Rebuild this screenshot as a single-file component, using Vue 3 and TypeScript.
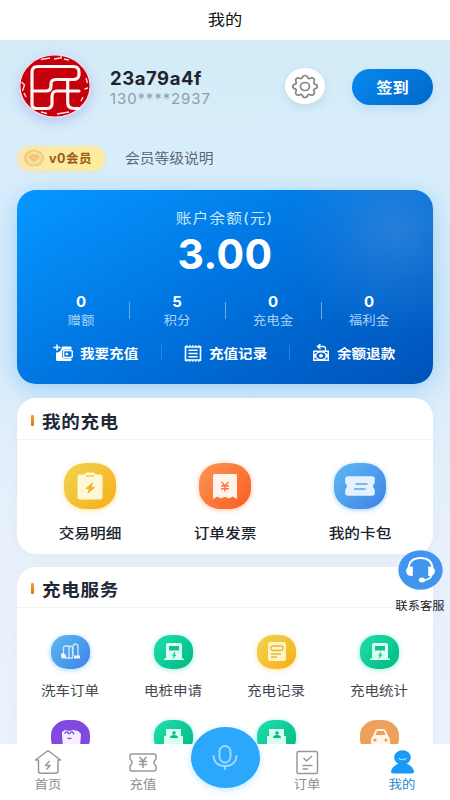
<script setup lang="ts">
interface Item { label: string; icon: string; tone: string }

const stats = [
  { value: '0', label: '赠额' },
  { value: '5', label: '积分' },
  { value: '0', label: '充电金' },
  { value: '0', label: '福利金' },
]
const actions = [
  { label: '我要充值', icon: 'wallet' },
  { label: '充值记录', icon: 'list' },
  { label: '余额退款', icon: 'refund' },
]
const charging: Item[] = [
  { label: '交易明细', icon: 'clipboard', tone: 'yellow' },
  { label: '订单发票', icon: 'invoice', tone: 'orange' },
  { label: '我的卡包', icon: 'coupon', tone: 'blue' },
]
const services: Item[] = [
  { label: '洗车订单', icon: 'wash', tone: 'blue' },
  { label: '电桩申请', icon: 'pile', tone: 'green' },
  { label: '充电记录', icon: 'record', tone: 'yellow' },
  { label: '充电统计', icon: 'pile', tone: 'green' },
  { label: '', icon: 'gift', tone: 'purple' },
  { label: '', icon: 'person', tone: 'green' },
  { label: '', icon: 'person', tone: 'green' },
  { label: '', icon: 'car', tone: 'tan' },
]
</script>

<template>
  <div class="page">
    <header class="title"><span class="wide">我的</span></header>

    <main class="content">
      <section class="profile">
        <div class="avatar">
          <svg width="72" height="64" viewBox="0 0 72 64" fill="none">
            <ellipse cx="36" cy="32" rx="35.5" ry="31.5" fill="#c4000d" />
            <ellipse cx="36" cy="32" rx="35.2" ry="31.2" stroke="#f3dcec" stroke-width="1.4" />
            <path d="M22 5.500l9-1.500M35 5l6-1M42 1v4M45 5l5 1M2.500 28l3 3-2 6M5 39l2 4M67 24l1.500 5M65.500 35l3.500-1M64 43l-2 4M38 60l12-2M22 58l6 1.500" stroke="#f8dedd" stroke-width="1.400" />
            <path d="M13 50V18q0-5.500 6-5.500h35q6 0 6 5.500v2.500q0 5-6 5H37q-5 0-5 4.500v2q0 5-5 5H13M13 50q0 4.500 4.500 4.500H28q5 0 5-5v-7q0-5.500 5-5.500h22M48.700 27v21.500q0 6 6 6H60" stroke="#fff5f3" stroke-width="3.200" stroke-linejoin="round" stroke-linecap="round" />
          </svg>
        </div>
        <div class="identity">
          <div class="name">23a79a4f</div>
          <div class="phone">130****2937</div>
        </div>
        <button class="gear" aria-label="设置">
          <svg width="28" height="25" viewBox="0 0 28 25" fill="none" stroke="#858585" stroke-width="1.700" stroke-linejoin="round">
            <path d="M11.300 3.700Q11.800 1.500 14 1.500T16.700 3.700Q17.500 5.200 19.300 4.300Q21.300 3.200 22.700 4.600T23 7.700Q22 9.300 23.900 10.100Q26.200 10.600 26.200 12.500T23.900 14.900Q22 15.700 23 17.300Q24.100 19 22.700 20.400T19.300 20.700Q17.500 19.800 16.700 21.300Q16.200 23.500 14 23.500T11.300 21.300Q10.500 19.800 8.700 20.700Q6.700 21.800 5.300 20.400T5 17.300Q6 15.700 4.100 14.900Q1.800 14.400 1.800 12.500T4.100 10.100Q6 9.300 5 7.700Q3.900 6 5.300 4.600T8.700 4.300Q10.500 5.200 11.300 3.700Z" />
            <ellipse cx="14" cy="12.500" rx="4.500" ry="4" />
          </svg>
        </button>
        <button class="checkin"><span class="wide">签到</span></button>
      </section>

      <section class="member">
        <div class="badge">
          <svg width="22" height="18" viewBox="0 0 22 18">
            <ellipse cx="11" cy="9" rx="10" ry="8.600" fill="#efcd7e" />
            <ellipse cx="11" cy="9" rx="7.600" ry="6.400" fill="#f9e09d" />
            <path d="M7.500 5.500h7L16.800 8.200 11 13.200 5.200 8.200z" fill="#efc575" />
            <path d="M8.800 8l2.200 1.800L13.200 8" fill="none" stroke="#f7dc9a" stroke-width="1" />
          </svg>
          <span>v0会员</span>
        </div>
        <div class="level"><span class="wide left">会员等级说明</span></div>
      </section>

      <section class="balance">
        <div class="caption"><span class="wide">账户余额(元)</span></div>
        <div class="amount">3.00</div>
        <div class="stats">
          <div v-for="s in stats" :key="s.label" class="stat">
            <b>{{ s.value }}</b>
            <span class="wide">{{ s.label }}</span>
          </div>
        </div>
        <div class="actions">
          <div v-for="a in actions" :key="a.label" class="action">
            <svg v-if="a.icon === 'wallet'" class="wallet" width="20" height="18" viewBox="0 0 20 18" fill="none">
              <path d="M4 .5v6M.5 3.500h7" stroke="#fff" stroke-width="1.600" />
              <path d="M9 2.500h8.500q1 0 1 1V5.500H12q-3 0-3 3v3q0 3 3 3h6.500v1.500q0 1-1 1H4.500q-1.500 0-1.500-1.500V8.500h1.500Q8.500 7.500 9 2.500z" fill="#fff" />
              <rect x="10.500" y="6.500" width="8.800" height="7" rx="1.500" stroke="#fff" stroke-width="1.500" />
              <ellipse cx="13.800" cy="10" rx="1.500" ry="1.300" fill="#fff" />
            </svg>
            <svg v-else-if="a.icon === 'list'" width="18" height="17" viewBox="0 0 18 17" fill="none" stroke="#fff" stroke-width="1.600">
              <path d="M1.500 1v15M16.500 1v15M1 2h16M1 15h16M4.500 5.300h9M4.500 8.500h9M4.500 11.700h9" />
              <path d="M2 1h14M2 16h14" stroke-dasharray="1.500 1.500" />
            </svg>
            <svg v-else width="18" height="18" viewBox="0 0 18 18">
              <path d="M8.500 0 5.500 2.500 8.500 5M6 2.500h5q2.500 0 2.500 2V7" fill="none" stroke="#fff" stroke-width="1.400" />
              <path d="M1 6.500h16V17H1z" fill="#fff" />
              <path d="M2.500 8h3l-3 2.500zM15.500 8h-3l3 2.500zM2.500 15.500h3l-3-2.500zM15.500 15.500h-3l3-2.500z" fill="#0a63c6" />
              <ellipse cx="9" cy="11.700" rx="4.500" ry="3.300" fill="#0a63c6" /><ellipse cx="9" cy="11.700" rx="2" ry="1.700" fill="#fff" />
            </svg>
            <span class="action-text"><span class="wide left">{{ a.label }}</span></span>
          </div>
        </div>
      </section>

      <section class="panel mine">
        <h2><i></i><span class="wide left">我的充电</span></h2>
        <div class="grid three">
          <div v-for="c in charging" :key="c.label" class="cell">
            <div class="tile big" :class="c.tone">
              <svg width="32" height="29" viewBox="0 0 32 29" fill="none">
                <template v-if="c.icon === 'clipboard'">
                  <path d="M6 2.500h5q0-2 2-2h6q2 0 2 2h5q2.500 0 2.500 2.500v20q0 2.500-2.500 2.500H6q-2.500 0-2.500-2.500V5Q3.500 2.500 6 2.500z" fill="#fff8d8" />
                  <path d="M12 4h8" stroke="#f3ce57" stroke-width="1.500" />
                  <path d="M18.500 11l-6.500 5.500h3.500L14 21l6.500-5.500H17z" fill="#f0b32a" stroke="#f0b32a" stroke-width="1" stroke-linejoin="round" />
                </template>
                <template v-else-if="c.icon === 'invoice'">
                  <path d="M5.500 2h21q1.500 0 1.500 1.500V27l-4.500-2.500L20 26.500q-1.500-1.500-4-1.500t-4 1.500L8.500 24.500 4 27V3.500Q4 2 5.500 2z" fill="#fff3eb" />
                  <path d="M12.500 10l3.500 4 3.500-4M16 14v5.500M12 14h8M12 16.800h8" stroke="#f77b45" stroke-width="1.500" />
                </template>
                <template v-else>
                  <path d="M4 4.300h24q2.800 0 2.800 2.700v4q-3.500 3 0 6.500V21q0 2.700-2.800 2.700H4Q1.200 23.700 1.200 21v-3.500q3.500-3.500 0-6.500V7Q1.200 4.300 4 4.300z" fill="#e4f1ff" />
                  <path d="M12 12h11M10.500 17h10.500" stroke="#5ba3ea" stroke-width="1.500" stroke-linecap="round" />
                </template>
              </svg>
            </div>
            <span class="wide">{{ c.label }}</span>
          </div>
        </div>
      </section>

      <section class="panel service">
        <h2><i></i><span class="wide left">充电服务</span></h2>
        <div class="grid four">
          <div v-for="(s, i) in services" :key="i" class="cell">
            <div class="tile" :class="s.tone">
              <svg width="22" height="20" viewBox="0 0 22 20" fill="none">
                <template v-if="s.icon === 'wash'">
                  <path d="M3.500 12V6q0-2 2-2h3.500v12H6M9 16V4.500h3.500V16H9M13 14V5q0-3 2.500-3T18 5v9" stroke="#cce8fd" stroke-width="1.300" />
                  <path d="M1 12q2.500-2 5 1v3.500H3Q1 16.500 1 14.500zM14 13.500h6v3h-6z" fill="#e9f6ff" />
                </template>
                <template v-else-if="s.icon === 'pile'">
                  <path d="M5 1h12q2 0 2 2v13.500h2V18H1v-1.500h2V3q0-2 2-2z" fill="#d9fff0" />
                  <path d="M6 4h10v4.500H6z" fill="#17bf90" />
                  <path d="M12 10l-2.500 3.300h1.800L10 16.500l3-3.600h-1.700z" fill="#17bf90" stroke="#17bf90" stroke-width=".5" />
                </template>
                <template v-else-if="s.icon === 'record'">
                  <path d="M4 0h14q2 0 2 2v15q0 2-2 2H4q-2 0-2-2V2q0-2 2-2z" fill="#fff4c5" />
                  <rect x="5" y="4" width="12" height="4.500" rx="2" stroke="#e9b92f" stroke-width="1.300" />
                  <path d="M5 12h10M5 15h6" stroke="#e9b92f" stroke-width="1.300" />
                </template>
                <template v-else-if="s.icon === 'gift'">
                  <path d="M2 5l3-2 4 1 4-1 5 1 3 3-1 13H3L2 8z" fill="#f6efff" />
                  <path d="M5 7q0-2.500 2-2t1.500 2.500M10 7q0-2.500 2-2t1.500 2.500M7.500 11q2 1 4 0" stroke="#874be1" stroke-width="1.300" />
                </template>
                <template v-else-if="s.icon === 'person'">
                  <path d="M3 2h15v7h2v11H1V9h2z" fill="#d6ffed" />
                  <circle cx="11" cy="6" r="1.800" fill="#0ab88a" /><path d="M7 11q0-3 4-3t4 3z" fill="#0ab88a" />
                </template>
                <template v-else>
                  <path d="M4 9l2-5q1-2 3-2h5q2 0 3 2l2 5q2 1 2 4v7H2v-7q0-3 2-4z" fill="#fff4e8" />
                  <path d="M6.500 8l1.500-4h7l1.500 4z" fill="#ef9e57" />
                  <circle cx="6" cy="13" r="1.600" fill="#ef9e57" /><circle cx="17" cy="13" r="1.600" fill="#ef9e57" />
                </template>
              </svg>
            </div>
            <span class="wide">{{ s.label }}</span>
          </div>
        </div>
      </section>
    </main>

    <aside class="support">
      <svg width="45" height="40" viewBox="0 0 45 40" fill="none">
        <ellipse cx="22.500" cy="20" rx="22.200" ry="19.700" fill="#4295ee" />
        <path d="M10.500 18q1-10 12-10t12 10" stroke="#fff" stroke-width="1.800" />
        <path d="M14.800 16.500v9.500q-6.300.5-6.800-4.700 0-5 6.800-4.800zM30.200 16.500v9.500q6.300.5 6.800-4.700 0-5-6.800-4.800z" fill="#fff" />
        <path d="M33.800 25q-1.500 4.500-8.300 5.500" stroke="#fff" stroke-width="1.700" />
        <ellipse cx="24" cy="30" rx="3.200" ry="2.500" fill="#fff" />
      </svg>
      <span class="wide">联系客服</span>
    </aside>

    <nav class="tabs">
      <div class="tab">
        <svg width="28" height="26" viewBox="0 0 28 26" fill="none" stroke="#999" stroke-width="1.500" stroke-linejoin="round">
          <path d="M4.500 11H1.500L14 1.500 26.500 11H24v11q0 2.200-2.200 2.200H6.700Q4.500 24.200 4.500 22z" />
          <path d="M15.500 12L11.500 16.500h4.500l-3.500 4" />
        </svg>
        <span class="wide">首页</span>
      </div>
      <div class="tab">
        <svg width="28" height="26" viewBox="0 0 28 26" fill="none" stroke="#999" stroke-width="1.500" stroke-linejoin="round">
          <path d="M3 5h22q2 0 2 2v3q-4 3.500 0 7v3q0 2-2 2H3q-2 0-2-2v-3q4-3.500 0-7V7q0-2 2-2z" />
          <path d="M10.500 8l3.500 4 3.500-4M14 12v7M10 12.500h8M10 15.500h8" />
        </svg>
        <span class="wide">充值</span>
      </div>
      <div class="mic">
        <svg width="30" height="30" viewBox="0 0 30 30" fill="none" stroke="#a1d7ff" stroke-width="2">
          <rect x="9.500" y="3" width="11" height="16.500" rx="5.500" />
          <path d="M3.500 13q1 10 11.500 10t11.500-10M15 23v3" stroke-linecap="round" />
        </svg>
      </div>
      <div class="tab">
        <svg width="28" height="26" viewBox="0 0 28 26" fill="none" stroke="#999" stroke-width="1.500">
          <rect x="4" y="2.500" width="20.500" height="22" rx="1.500" />
          <path d="M10.500 9l3 3L19 7M9.500 16.500h10M9.500 20h5.500" />
        </svg>
        <span class="wide">订单</span>
      </div>
      <div class="tab active">
        <svg width="28" height="26" viewBox="0 0 28 26">
          <ellipse cx="14.500" cy="8.500" rx="8.300" ry="7.300" fill="#189af5" />
          <path d="M9.500 15h10q5.500 2.500 6.500 7.500.2 2-2 2H5q-2 0-2-2Q4 17.500 9.500 15z" fill="#189af5" />
          <path d="M11 9.500q3.500 2.500 7 0" fill="none" stroke="#a8dcff" stroke-width="1.200" stroke-linecap="round" />
        </svg>
        <span class="wide">我的</span>
      </div>
    </nav>
  </div>
</template>

<style>
body { margin: 0; overflow: hidden; }
</style>

<style scoped>
.page {
  position: relative;
  display: flex;
  flex-direction: column;
  width: 450px;
  height: 800px;
  overflow: hidden;
  background: #fff;
  font-family: Inter, "Noto Sans CJK SC", sans-serif;
  color: #20242c;
}
.page * { box-sizing: border-box; }
.wide { display: inline-block; transform: scaleX(1.12); white-space: nowrap; }
.wide.left { transform-origin: left center; }
button { border: 0; padding: 0; font: inherit; }
svg { display: block; flex: none; }

.title { flex: none; height: 40px; line-height: 39px; text-align: center; font-size: 15px; color: #111; }
.title .wide { transform: scaleX(1.15); }
.content {
  flex: 1;
  min-height: 0;
  overflow: hidden;
  padding: 0 17px;
  background: linear-gradient(180deg, #d3ebf7 0, #d9eefc 130px, #d5ebfb 300px, #e2effb 400px, #e8f0fb 520px, #ebf1fc 100%);
}
.profile { display: flex; align-items: center; height: 92px; padding-left: 2px; }
.avatar { width: 72px; height: 64px; border-radius: 50%; box-shadow: 0 4px 12px rgba(130, 140, 235, .4); }
.identity { width: 175px; margin-left: 19px; padding-top: 3px; }
.name { font-size: 18.500px; line-height: 22px; font-weight: 700; letter-spacing: .55px; }
.phone { font-size: 15px; line-height: 19px; color: #929ca4; letter-spacing: .88px; }
.gear {
  display: grid; place-items: center; width: 40px; height: 36px; border-radius: 50%;
  background: #fff; box-shadow: 0 3px 9px rgba(60, 100, 140, .14);
}
.checkin {
  width: 81px; height: 36px; margin-top: 2px; margin-left: 27px; border-radius: 18px;
  background: linear-gradient(135deg, #0789ef, #0068c9);
  box-shadow: 0 4px 10px rgba(0, 110, 210, .12);
  color: #fff; font-size: 14.500px; font-weight: 700; line-height: 35px;
}
.member { display: flex; align-items: center; height: 26px; margin-top: 13px; }
.badge {
  display: flex; align-items: center; gap: 4px; width: 88px; height: 25px; padding-left: 6px;
  border-radius: 13px; background: linear-gradient(90deg, #fbe7b0, #ffec9b);
  color: #9b5a12; font-size: 12.500px; font-weight: 700; letter-spacing: .55px; white-space: nowrap;
  box-shadow: 0 1px 4px rgba(240, 210, 120, .35);
}
.badge span { padding-bottom: 1px; }
.level { margin-left: 20px; padding-bottom: 2px; color: #5b6875; font-size: 13.200px; }

.balance {
  height: 194px; margin-top: 19px; padding: 18px 16px 0; border-radius: 19px; color: #fff;
  background:
    radial-gradient(circle at 91% 20%, rgba(80, 145, 218, .48), rgba(80, 145, 218, .2) 55px, transparent 110px),
    linear-gradient(150deg, #0695ff 4%, #0072dd 52%, #0052b9 100%);
  box-shadow: 0 5px 24px rgba(30, 145, 230, .32);
}
.caption { height: 20px; line-height: 20px; text-align: center; font-size: 14px; letter-spacing: 1px; color: #cae8ff; }
.amount { height: 50px; line-height: 52px; text-align: center; font-size: 41px; font-weight: 700; letter-spacing: .4px; }
.stats { display: grid; grid-template-columns: repeat(4, 96px); height: 50px; margin-top: 14px; }
.stat { position: relative; display: flex; flex-direction: column; align-items: center; font-size: 12px; line-height: 19px; color: #a8d3fa; }
.stat b { font-size: 15px; line-height: 19px; color: #fff; }
.stat + .stat::before { content: ""; position: absolute; left: 0; top: 10px; width: 1px; height: 17px; background: #6aacec; }
.actions { display: grid; grid-template-columns: repeat(3, 128px); }
.action { position: relative; display: flex; align-items: center; justify-content: center; gap: 7px; height: 22px; font-size: 13px; font-weight: 700; }
.action-text { width: 58px; padding-bottom: 2px; }
.wallet { margin-left: -3px; }
.action + .action::before { content: ""; position: absolute; left: 0; top: 3px; width: 1px; height: 15px; background: #2e84da; }

.panel { margin-top: 14px; background: #fff; border-radius: 19px; box-shadow: 0 2px 12px rgba(70, 120, 190, .05); }
.mine { height: 156px; }
.service { height: 300px; margin-top: 13px; }
.panel h2 {
  display: flex; align-items: center; height: 41px; margin: 0; padding: 3px 0 0 14px;
  border-bottom: 1px solid #f0f4f7; font-size: 16.500px; letter-spacing: .7px; font-weight: 700; color: #202735;
}
.mine h2 { height: 42px; padding-top: 4px; }
.panel h2 i { width: 3px; height: 11px; margin-right: 8px; border-radius: 1px; background: linear-gradient(#f3a33b, #d87512); }
.grid { display: grid; justify-content: center; }
.three { grid-template-columns: repeat(3, 135px); padding-top: 23px; }
.four { grid-template-columns: repeat(4, 103px); grid-auto-rows: 85px; padding-top: 27px; }
.cell { display: flex; flex-direction: column; align-items: center; }
.three .cell { font-size: 14px; font-weight: 500; line-height: 20px; gap: 14px; }
.four .cell { font-size: 13px; line-height: 20px; gap: 11px; color: #3f474f; }
.tile { display: grid; place-items: center; width: 39px; height: 34px; border-radius: 17px / 15px; }
.tile.big { width: 52px; height: 46px; border-radius: 22px / 20px; }
.yellow { background: linear-gradient(135deg, #f0d451, #f7ae17); box-shadow: 0 1px 5px rgba(250, 200, 50, .5); }
.orange { background: linear-gradient(135deg, #fb9855, #fa5c21); box-shadow: 0 1px 5px rgba(255, 120, 50, .45); }
.blue { background: linear-gradient(135deg, #5ebaf0, #3d82e8); box-shadow: 0 1px 5px rgba(70, 170, 250, .5); }
.green { background: linear-gradient(135deg, #20e0af, #00b780); box-shadow: 0 1px 5px rgba(20, 220, 170, .45); }
.purple { background: #8149df; }
.tan { background: #efa05b; }

.support { position: absolute; left: 390px; top: 550px; width: 60px; display: flex; flex-direction: column; align-items: center; font-size: 11px; line-height: 16px; gap: 8px; color: #17191e; }

.tabs { position: relative; display: flex; flex: none; height: 56px; background: #fff; }
.tab { flex: 1; display: flex; flex-direction: column; align-items: center; padding-top: 5px; font-size: 12px; line-height: 19px; color: #8d8d8d; }
.active { color: #2389cc; }
.mic {
  display: grid; place-items: center; width: 69px; height: 61px; margin-top: -17px;
  border-radius: 50%; background: #2ba7fc; box-shadow: 0 2px 7px rgba(50, 180, 255, .3);
}
</style>
